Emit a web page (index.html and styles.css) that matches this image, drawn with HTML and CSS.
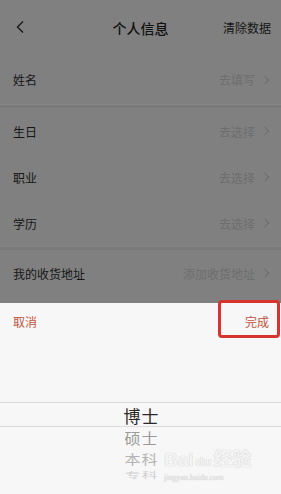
FILE: index.html
```html
<!DOCTYPE html>
<html lang="zh">
<head>
<meta charset="utf-8">
<title>个人信息</title>
<link rel="stylesheet" href="styles.css">
</head>
<body>
<div class="page">
  <div class="overlay">
    <header class="header">
      <svg class="back" width="10" height="14" viewBox="0 0 10 14"><path d="M8 1.5 L2.5 7 L8 12.5" fill="none" stroke="#1a1a1a" stroke-width="1.4"/></svg>
      <div class="title">个人信息</div>
      <div class="clear">清除数据</div>
    </header>
    <div class="row first"><span class="label">姓名</span><span class="value">去填写<i class="chev"></i></span></div>
    <div class="gap"></div>
    <div class="row"><span class="label">生日</span><span class="value">去选择<i class="chev"></i></span></div>
    <div class="row"><span class="label">职业</span><span class="value">去选择<i class="chev"></i></span></div>
    <div class="row"><span class="label">学历</span><span class="value">去选择<i class="chev"></i></span></div>
    <div class="gap"></div>
    <div class="row"><span class="label">我的收货地址</span><span class="value">添加收货地址<i class="chev"></i></span></div>
  </div>
  <div class="sheet">
    <div class="toolbar">
      <span class="btn">取消</span>
      <span class="btn">完成</span>
    </div>
    <div class="highlight"></div>
    <div class="picker">
      <div class="opt sel">博士</div>
      <div class="opt o1">硕士</div>
      <div class="opt o2">本科</div>
      <div class="opt o3">专科</div>
    </div>
    <div class="watermark">
      <div class="wm-top">Bai<span class="du">du</span>经验</div>
      <div class="wm-sub">jingyan.baidu.com</div>
    </div>
  </div>
</div>
</body>
</html>
```

FILE: styles.css
```css
* { box-sizing: border-box; }
html, body { margin: 0; padding: 0; }
body {
  width: 281px;
  height: 494px;
  overflow: hidden;
  font-family: "Noto Sans CJK SC", "Noto Sans", sans-serif;
  background: #f7f7f7;
}
.page {
  width: 281px;
  height: 494px;
  display: flex;
  flex-direction: column;
}
.overlay {
  height: 303px;
  background: #808080;
  flex: none;
}
.header {
  height: 55px;
  display: flex;
  align-items: center;
  padding: 0 10px 0 15px;
  position: relative;
}
.back { flex: none; margin-top: -1px; }
.title {
  position: absolute;
  left: 0;
  right: 0;
  text-align: center;
  font-size: 14px;
  color: #111;
  font-weight: 500;
  pointer-events: none;
}
.clear {
  margin-left: auto;
  font-size: 12px;
  color: #151515;
}
.row {
  height: 46px;
  display: flex;
  align-items: center;
  justify-content: space-between;
  padding: 0 11px 0 13px;
}
.row.first { height: 49px; }
.label {
  font-size: 12px;
  color: #161616;
}
.value {
  display: flex;
  align-items: center;
  font-size: 12px;
  color: #6e6e6e;
}
.chev {
  width: 6px;
  height: 6px;
  border-top: 1px solid #6e6e6e;
  border-right: 1px solid #6e6e6e;
  transform: rotate(45deg);
  margin-left: 7px;
  margin-right: 2px;
}
.gap {
  height: 4px;
  background: #7a7a7a;
  border-top: 1px solid #858585;
}
.sheet {
  flex: 1;
  position: relative;
  background: #f7f7f7;
  display: flex;
  flex-direction: column;
}
.toolbar {
  height: 40px;
  display: flex;
  align-items: center;
  justify-content: space-between;
  padding: 0 12px 3px 13px;
}
.btn {
  font-size: 12px;
  color: #c4533f;
}
.highlight {
  position: absolute;
  top: -3px;
  right: 1px;
  width: 62px;
  height: 38px;
  border: 3px solid #d5352c;
  border-radius: 4px;
}
.picker {
  margin-top: 59px;
  display: flex;
  flex-direction: column;
  align-items: center;
}
.opt {
  width: 100%;
  text-align: center;
  padding-left: 2px;
  letter-spacing: 1px;
}
.sel {
  height: 25px;
  line-height: 25px;
  font-size: 17px;
  color: #2a2a2a;
  border-top: 1px solid #dcdcdc;
  border-bottom: 1px solid #dcdcdc;
}
.o1 {
  height: 22px;
  line-height: 22px;
  font-size: 16px;
  color: #9a9a9a;
  transform: scaleY(0.92);
}
.o2 {
  height: 19px;
  line-height: 19px;
  font-size: 16px;
  color: #b4b4b4;
  transform: scaleY(0.8);
}
.o3 {
  height: 13px;
  line-height: 13px;
  font-size: 16px;
  color: #d0d0d0;
  transform: scaleY(0.5);
}
.watermark {
  position: absolute;
  left: 164px;
  top: 147px;
  color: #f3f3f3;
  text-shadow: 0 0 1px #d4d4d4, 0 0 1px #d4d4d4;
  pointer-events: none;
}
.wm-top {
  font-family: "Liberation Sans", "Noto Sans CJK SC", sans-serif;
  font-size: 19px;
  font-weight: bold;
  line-height: 20px;
  letter-spacing: 0;
}
.du {
  font-size: 13px;
  margin: 0 2px;
}
.wm-sub {
  font-family: "Liberation Serif", serif;
  font-size: 8px;
  line-height: 12px;
  color: #e8e8e8;
}
```
